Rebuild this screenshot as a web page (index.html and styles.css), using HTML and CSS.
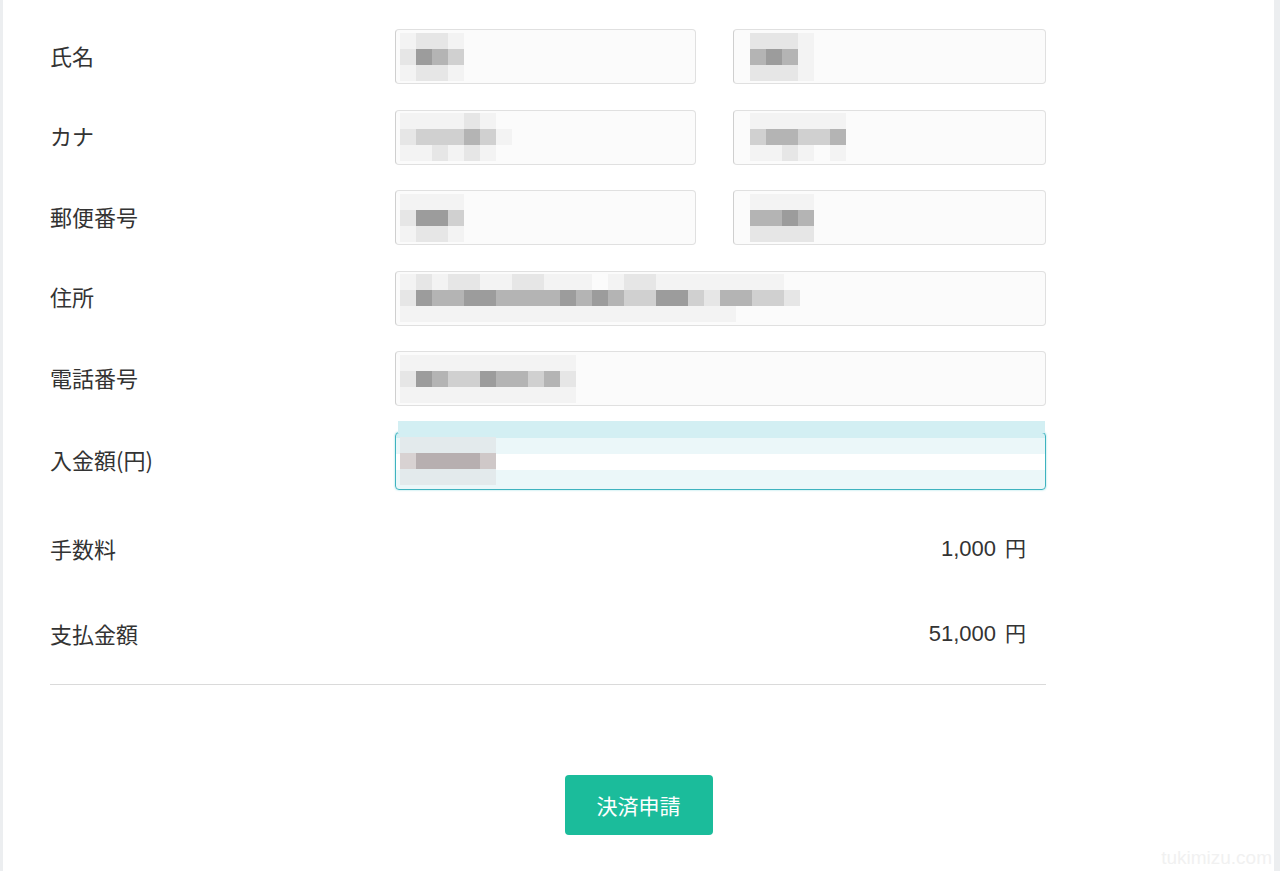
FILE: index.html
```html
<!DOCTYPE html>
<html lang="ja">
<head>
<meta charset="utf-8">
<title>決済申請</title>
<link rel="stylesheet" href="styles.css">
</head>
<body>
<div class="page">
  <div class="card">
    <form class="form">
      <div class="row">
        <div class="label">氏名</div>
        <div class="fields two">
          <div class="input pad-l">
            <div class="mosaic">
              <div class="mr"><i class="c1"></i><i class="c2"></i><i class="c2"></i><i class="c1"></i></div>
              <div class="mr"><i class="c2"></i><i class="c5"></i><i class="c4"></i><i class="c3"></i></div>
              <div class="mr"><i class="c1"></i><i class="c2"></i><i class="c2"></i><i class="c1"></i></div>
            </div>
          </div>
          <div class="input pad-r">
            <div class="mosaic">
              <div class="mr"><i class="c2"></i><i class="c2"></i><i class="c2"></i><i class="c1"></i></div>
              <div class="mr"><i class="c4"></i><i class="c5"></i><i class="c4"></i><i class="c1"></i></div>
              <div class="mr"><i class="c2"></i><i class="c2"></i><i class="c2"></i><i class="c1"></i></div>
            </div>
          </div>
        </div>
      </div>

      <div class="row">
        <div class="label">カナ</div>
        <div class="fields two">
          <div class="input pad-l">
            <div class="mosaic">
              <div class="mr"><i class="c1"></i><i class="c1"></i><i class="c1"></i><i class="c1"></i><i class="c2"></i><i class="c1"></i><i class="c0"></i></div>
              <div class="mr"><i class="c2"></i><i class="c3"></i><i class="c3"></i><i class="c3"></i><i class="c4"></i><i class="c3"></i><i class="c1"></i></div>
              <div class="mr"><i class="c1"></i><i class="c1"></i><i class="c2"></i><i class="c1"></i><i class="c2"></i><i class="c1"></i><i class="c0"></i></div>
            </div>
          </div>
          <div class="input pad-r">
            <div class="mosaic">
              <div class="mr"><i class="c1"></i><i class="c1"></i><i class="c1"></i><i class="c1"></i><i class="c1"></i><i class="c1"></i></div>
              <div class="mr"><i class="c3"></i><i class="c4"></i><i class="c4"></i><i class="c3"></i><i class="c3"></i><i class="c4"></i></div>
              <div class="mr"><i class="c1"></i><i class="c1"></i><i class="c2"></i><i class="c1"></i><i class="c0"></i><i class="c1"></i></div>
            </div>
          </div>
        </div>
      </div>

      <div class="row">
        <div class="label">郵便番号</div>
        <div class="fields two">
          <div class="input pad-l">
            <div class="mosaic">
              <div class="mr"><i class="c1"></i><i class="c1"></i><i class="c1"></i><i class="c1"></i></div>
              <div class="mr"><i class="c2"></i><i class="c5"></i><i class="c5"></i><i class="c3"></i></div>
              <div class="mr"><i class="c1"></i><i class="c2"></i><i class="c2"></i><i class="c1"></i></div>
            </div>
          </div>
          <div class="input pad-r">
            <div class="mosaic">
              <div class="mr"><i class="c1"></i><i class="c1"></i><i class="c1"></i><i class="c1"></i></div>
              <div class="mr"><i class="c4"></i><i class="c4"></i><i class="c5"></i><i class="c4"></i></div>
              <div class="mr"><i class="c2"></i><i class="c2"></i><i class="c2"></i><i class="c2"></i></div>
            </div>
          </div>
        </div>
      </div>

      <div class="row">
        <div class="label">住所</div>
        <div class="fields">
          <div class="input pad-l">
            <div class="mosaic">
              <div class="mr"><i class="c1"></i><i class="c2"></i><i class="c1"></i><i class="c2"></i><i class="c2"></i><i class="c1"></i><i class="c1"></i><i class="c2"></i><i class="c2"></i><i class="c1"></i><i class="c1"></i><i class="c1"></i><i class="c0"></i><i class="c1"></i><i class="c2"></i><i class="c2"></i><i class="c1"></i><i class="c1"></i><i class="c1"></i><i class="c1"></i><i class="c1"></i><i class="c1"></i><i class="c1"></i><i class="c1"></i><i class="c0"></i></div>
              <div class="mr"><i class="c2"></i><i class="c5"></i><i class="c4"></i><i class="c4"></i><i class="c5"></i><i class="c5"></i><i class="c4"></i><i class="c4"></i><i class="c4"></i><i class="c4"></i><i class="c5"></i><i class="c4"></i><i class="c5"></i><i class="c4"></i><i class="c3"></i><i class="c3"></i><i class="c5"></i><i class="c5"></i><i class="c3"></i><i class="c2"></i><i class="c4"></i><i class="c4"></i><i class="c3"></i><i class="c3"></i><i class="c2"></i></div>
              <div class="mr"><i class="c1"></i><i class="c1"></i><i class="c1"></i><i class="c1"></i><i class="c1"></i><i class="c1"></i><i class="c1"></i><i class="c1"></i><i class="c1"></i><i class="c1"></i><i class="c1"></i><i class="c1"></i><i class="c1"></i><i class="c1"></i><i class="c1"></i><i class="c1"></i><i class="c1"></i><i class="c1"></i><i class="c1"></i><i class="c1"></i><i class="c1"></i><i class="c0"></i><i class="c0"></i><i class="c0"></i><i class="c0"></i></div>
            </div>
          </div>
        </div>
      </div>

      <div class="row">
        <div class="label">電話番号</div>
        <div class="fields">
          <div class="input pad-l">
            <div class="mosaic">
              <div class="mr"><i class="c1"></i><i class="c1"></i><i class="c1"></i><i class="c1"></i><i class="c1"></i><i class="c1"></i><i class="c1"></i><i class="c1"></i><i class="c1"></i><i class="c1"></i><i class="c1"></i></div>
              <div class="mr"><i class="c2"></i><i class="c5"></i><i class="c4"></i><i class="c3"></i><i class="c3"></i><i class="c5"></i><i class="c4"></i><i class="c4"></i><i class="c3"></i><i class="c4"></i><i class="c2"></i></div>
              <div class="mr"><i class="c1"></i><i class="c1"></i><i class="c1"></i><i class="c1"></i><i class="c1"></i><i class="c1"></i><i class="c1"></i><i class="c1"></i><i class="c1"></i><i class="c1"></i><i class="c1"></i></div>
            </div>
          </div>
        </div>
      </div>

      <div class="row">
        <div class="label">入金額(円)</div>
        <div class="fields">
          <div class="input focus pad-l">
            <div class="mosaic">
              <div class="mr"><i class="f1"></i><i class="f1"></i><i class="f1"></i><i class="f1"></i><i class="f1"></i><i class="f1"></i></div>
              <div class="mr"><i class="r2"></i><i class="r4"></i><i class="r4"></i><i class="r4"></i><i class="r4"></i><i class="r3"></i></div>
              <div class="mr"><i class="f1"></i><i class="f1"></i><i class="f1"></i><i class="f1"></i><i class="f1"></i><i class="f1"></i></div>
            </div>
          </div>
        </div>
      </div>

      <div class="summary">
        <div class="sum-row">
          <div class="label">手数料</div>
          <div class="amount"><span class="num">1,000</span><span class="yen">円</span></div>
        </div>
        <div class="sum-row">
          <div class="label">支払金額</div>
          <div class="amount"><span class="num">51,000</span><span class="yen">円</span></div>
        </div>
      </div>
      <hr class="divider">
    </form>
    <div class="actions">
      <button class="submit" type="button">決済申請</button>
    </div>
    <div class="watermark">tukimizu.com</div>
  </div>
</div>
</body>
</html>
```

FILE: styles.css
```css
html, body {
  margin: 0;
  padding: 0;
  height: 100%;
}
body {
  background: #eceef0;
  font-family: "Noto Sans CJK JP", "Noto Sans", sans-serif;
  color: #333;
  overflow: hidden;
}
.page {
  height: 871px;
  padding-left: 3px;
}
.card {
  position: relative;
  width: 1271px;
  height: 871px;
  background: #fff;
}
.form {
  margin: 0 0 0 47px;
  width: 996px;
  padding-top: 29px;
  display: flex;
  flex-direction: column;
}
.row {
  display: flex;
  align-items: center;
  height: 55px;
  margin-bottom: 25.5px;
}
.row:nth-child(6) {
  height: 58px;
  margin-bottom: 0;
}
.label {
  width: 345px;
  flex: none;
  font-size: 22px;
  line-height: 1;
  color: #333;
  padding-bottom: 4px;
}
.fields {
  flex: 1;
  display: flex;
  height: 100%;
  gap: 37px;
}
.input {
  flex: 1;
  position: relative;
  box-sizing: border-box;
  height: 100%;
  border: 1px solid #e0e0e0;
  border-left-color: #cfcfcf;
  border-radius: 4px;
  background: #fbfbfb;
  display: flex;
  align-items: center;
}
.pad-l { padding-left: 4px; }
.pad-r { padding-left: 16px; }
.input.focus {
  border-color: #3eb3bf;
  box-shadow: 0 0 2px rgba(60, 190, 205, 0.6);
  background: linear-gradient(to bottom, #d3eff3 0, #d3eff3 5px, #ebf7f9 5px, #ebf7f9 21px, #ffffff 21px, #ffffff 37px, #ebf7f9 37px);
}
.input.focus::before {
  content: "";
  position: absolute;
  left: 2px;
  right: 0;
  top: -12px;
  height: 12px;
  background: #d3eff3;
}
.mosaic {
  display: flex;
  flex-direction: column;
}
.mr {
  display: flex;
}
.mr i {
  display: block;
  width: 16px;
  height: 16px;
}
.c0 { background: transparent; }
.c1 { background: #f3f3f3; }
.c2 { background: #e6e6e6; }
.c3 { background: #d0d0d0; }
.c4 { background: #b4b4b4; }
.c5 { background: #9c9c9c; }
.f1 { background: #e3eaec; }
.r2 { background: #d8d2d2; }
.r3 { background: #cfc8c8; }
.r4 { background: #b7afb0; }

.summary {
  display: flex;
  flex-direction: column;
  margin-top: 18px;
}
.sum-row {
  display: flex;
  align-items: center;
  justify-content: space-between;
  height: 85px;
}
.amount {
  padding-right: 20px;
  padding-bottom: 4px;
  font-size: 22px;
  line-height: 1;
  color: #333;
  display: flex;
  align-items: baseline;
}
.num {
  font-family: "Liberation Sans", Arial, sans-serif;
}
.yen {
  margin-left: 9px;
  font-family: "Noto Sans CJK JP", sans-serif;
  font-size: 21px;
}
.divider {
  margin: 6px 0 0 0;
  border: 0;
  border-top: 1px solid #dadada;
  height: 0;
}
.actions {
  display: flex;
  justify-content: center;
  padding-top: 90px;
}
.submit {
  width: 148px;
  height: 60px;
  border: 0;
  border-radius: 4px;
  background: #1bbc9b;
  color: #fff;
  font-family: "Noto Sans CJK JP", sans-serif;
  font-size: 21px;
  cursor: pointer;
}
.watermark {
  position: absolute;
  right: 2px;
  bottom: 2px;
  font-family: "Liberation Sans", Arial, sans-serif;
  font-size: 19px;
  color: #f1f1f1;
}
```
